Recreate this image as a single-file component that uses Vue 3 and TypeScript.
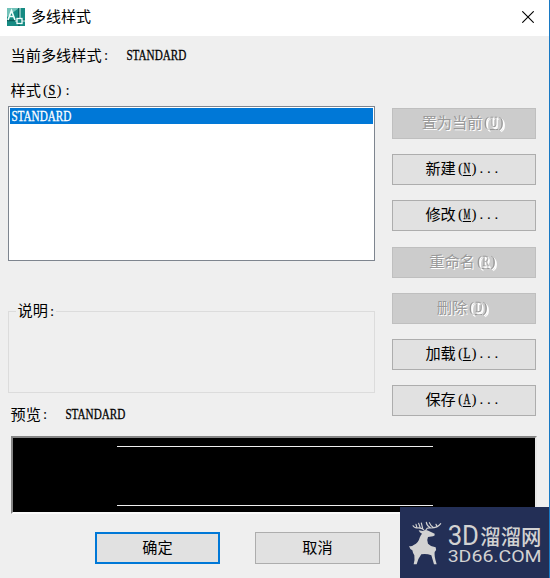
<script setup lang="ts">
import { h } from 'vue'
import type { FunctionalComponent } from 'vue'

interface Action {
  label: string
  key: string
  more?: boolean
  disabled?: boolean
}

const actions: Action[] = [
  { label: '置为当前', key: 'U', disabled: true },
  { label: '新建', key: 'N', more: true },
  { label: '修改', key: 'M', more: true },
  { label: '重命名', key: 'R', disabled: true },
  { label: '删除', key: 'D', disabled: true },
  { label: '加载', key: 'L', more: true },
  { label: '保存', key: 'A', more: true },
]

const CELL = 7.6
const BEARING: Record<string, number> = { '(': 2, ')': 0.6, ':': 2, '.': 0.8 }

// Half-width serif text: letters are condensed, punctuation sits in fixed cells
const Latin: FunctionalComponent<{ text: string }> = (props) => {
  const width = props.text.length * CELL
  const fit = /^[A-Z]+$/.test(props.text)
    ? { x: 0.4, textLength: width - 0.8, lengthAdjust: 'spacingAndGlyphs' }
    : { class: 'mark', x: [...props.text].map((c, i) => i * CELL + (BEARING[c] ?? 0)).join(' ') }
  return h('svg', { class: 'latin', width, height: 18 }, [h('text', { y: 14.6, ...fit }, props.text)])
}
Latin.props = ['text']
</script>

<template>
  <div class="dialog">
    <header class="titlebar">
      <svg class="app-icon" viewBox="0 0 18 18">
        <rect width="18" height="18" fill="#168b83" />
        <path d="M0 0h12L0 9z" fill="#72c2b9" />
        <path d="M12 0v18M0 12.5h18" stroke="#075c58" stroke-width="1.5" />
        <path d="M1 12 4.5 2.5 8 12M2.5 8.5h4" fill="none" stroke="#effffa" stroke-width="1.6" />
        <path d="M13 0v10M8 13h2M15 13h3" stroke="#d9f3ef" stroke-width="1" />
        <rect x="10" y="10.5" width="5" height="5" fill="#168b83" stroke="#f4fffd" stroke-width="1.3" />
      </svg>
      <h1>多线样式</h1>
      <svg class="close" viewBox="0 0 12 12"><path d="M.3.3l11.4 11.4M11.7.3L.3 11.7" stroke="#000" stroke-width="1.1" /></svg>
    </header>

    <main class="content">
      <div class="row current">当前多线样式<Latin text=":" /><Latin class="value" text="STANDARD" /></div>
      <div class="columns">
        <section class="left">
          <div class="row">样式<Latin text="(" /><u><Latin text="S" /></u><Latin text="):" /></div>
          <div class="list"><div class="item"><Latin text="STANDARD" /></div></div>
          <fieldset><legend>说明<Latin text=":" /></legend></fieldset>
          <div class="row">预览<Latin text=":" /><Latin class="value" text="STANDARD" /></div>
        </section>
        <nav class="actions">
          <button v-for="a in actions" :key="a.key" :disabled="a.disabled">
            {{ a.label }}<Latin text="(" /><u><Latin :text="a.key" /></u><Latin :text="a.more ? ')...' : ')'" />
          </button>
        </nav>
      </div>
      <div class="preview"><i /><i /></div>
      <footer><button class="primary">确定</button><button>取消</button></footer>
    </main>

    <svg class="badge" viewBox="15 21 450 213">
      <rect x="15" y="21" width="450" height="213" fill="#232f56" />
      <g fill="none" stroke="#d2d2d2" stroke-width="3.4" stroke-linecap="round" stroke-linejoin="round">
        <path d="M86 89Q78 82 66 84Q56 83 54 77M66 84L63 73M76 84L71 70M83 85L79 69" />
        <path d="M93 89Q96 82 108 84Q128 84 137 71M106 83Q95 77 94 67M116 83Q106 77 103 68M126 80L123 73" />
      </g>
      <path d="M71 91L84 93Q91 87 100 92L119 101Q121 107 114 109L99 111Q94 121 99 131Q107 140 122 142Q126 149 119 156Q117 168 125 193H117L109 166Q94 160 79 163Q70 174 65 193H56Q60 179 58 166Q53 158 52 151Q45 149 42 138Q49 141 56 135Q71 127 74 113Q77 106 81 101Q73 98 71 91Z" fill="#d2d2d2" />
      <g fill="#d2d2d2">
        <text x="158" y="136" font-size="84" textLength="94" lengthAdjust="spacingAndGlyphs" class="brand">3D</text>
        <text x="256" y="131" font-size="63" textLength="183" lengthAdjust="spacingAndGlyphs" class="brand-cn">溜溜网</text>
        <text x="158" y="187" font-size="47" textLength="282" lengthAdjust="spacingAndGlyphs" class="brand">3D66.COM</text>
      </g>
    </svg>
  </div>
</template>

<style>
body { margin: 0; }
.latin { display: block; flex: none; overflow: visible; }
.latin text { font-family: "Liberation Serif", serif; font-size: 15px; fill: currentColor; stroke: currentColor; stroke-width: .3px; }
.latin .mark { stroke-width: 0; }
</style>

<style scoped>
.dialog {
  position: relative; box-sizing: border-box; width: 550px; height: 578px; overflow: hidden;
  border-right: 1px solid #1879c4; background: #efefef; color: #000;
  font: 15.2px/18px "Noto Sans CJK SC", sans-serif;
}
.titlebar { display: flex; align-items: center; box-sizing: border-box; height: 36px; padding: 0 15px 3px 7px; background: #fff; }
.app-icon { width: 18px; height: 18px; }
h1 { flex: 1; margin: 0 0 1px 6px; font-size: 15px; font-weight: 400; }
.close { width: 12px; height: 12px; }
.content { padding: 9px 12px 0 8px; }
.row { display: flex; padding-left: 2.5px; height: 18px; white-space: nowrap; }
.value { margin-left: 17px; }
.columns { display: grid; grid-template-columns: 367px 144px; column-gap: 17.4px; margin-top: 17px; }
.list { box-sizing: border-box; height: 155px; margin-top: 8px; padding: 1px; border: 1px solid #7e858f; background: #fff; }
.item { display: flex; height: 16px; padding-left: 1px; background: #0078d7; color: #fff; line-height: 16px; }
.item svg { margin-top: -1.6px; }
fieldset { box-sizing: border-box; height: 92px; min-width: 0; margin: 40px 0 11px; padding: 0; border: 1px solid #dcdcdc; }
legend { display: flex; height: 20px; margin-left: 6.5px; padding: 0 1px 0 2px; line-height: 17px; }
.actions { display: flex; flex-direction: column; gap: 15.2px; padding-top: 28px; }
.actions button { padding-right: 2px; }
button {
  display: flex; align-items: center; justify-content: center; box-sizing: border-box; height: 31px;
  margin: 0; padding: 0 0 5px; border: 1px solid #adadad; background: #e1e1e1; color: #000; font: inherit;
}
button:disabled { border-color: #bfbfbf; background: #ccc; color: #999; text-shadow: 1px 1px 0 #fff; }
button:disabled svg { filter: drop-shadow(1px 1px 0 #fff); }
u { display: block; box-sizing: border-box; height: 18px; border-bottom: 1px solid; text-decoration: none; }
.preview {
  display: flex; flex-direction: column; justify-content: space-between; box-sizing: border-box;
  width: 526px; height: 78px; margin: 14px 0 0 3px; padding: 8px 102px 6px 104px;
  border: 2px solid #858585; border-right-color: #e8e8e8; border-bottom-color: #fafafa; background: #000;
}
.preview i { height: 1.4px; background: #eee; }
footer { display: flex; gap: 35px; margin: 18px 0 0 87px; }
footer button { width: 125px; height: 32px; }
footer .primary { border: 2px solid #0078d7; }
.badge { position: absolute; left: 400px; top: 507px; width: 150px; height: 71px; }
.brand { font-family: Roboto, sans-serif; }
.brand-cn { font-family: "Noto Sans CJK SC", sans-serif; font-weight: 500; }
</style>
